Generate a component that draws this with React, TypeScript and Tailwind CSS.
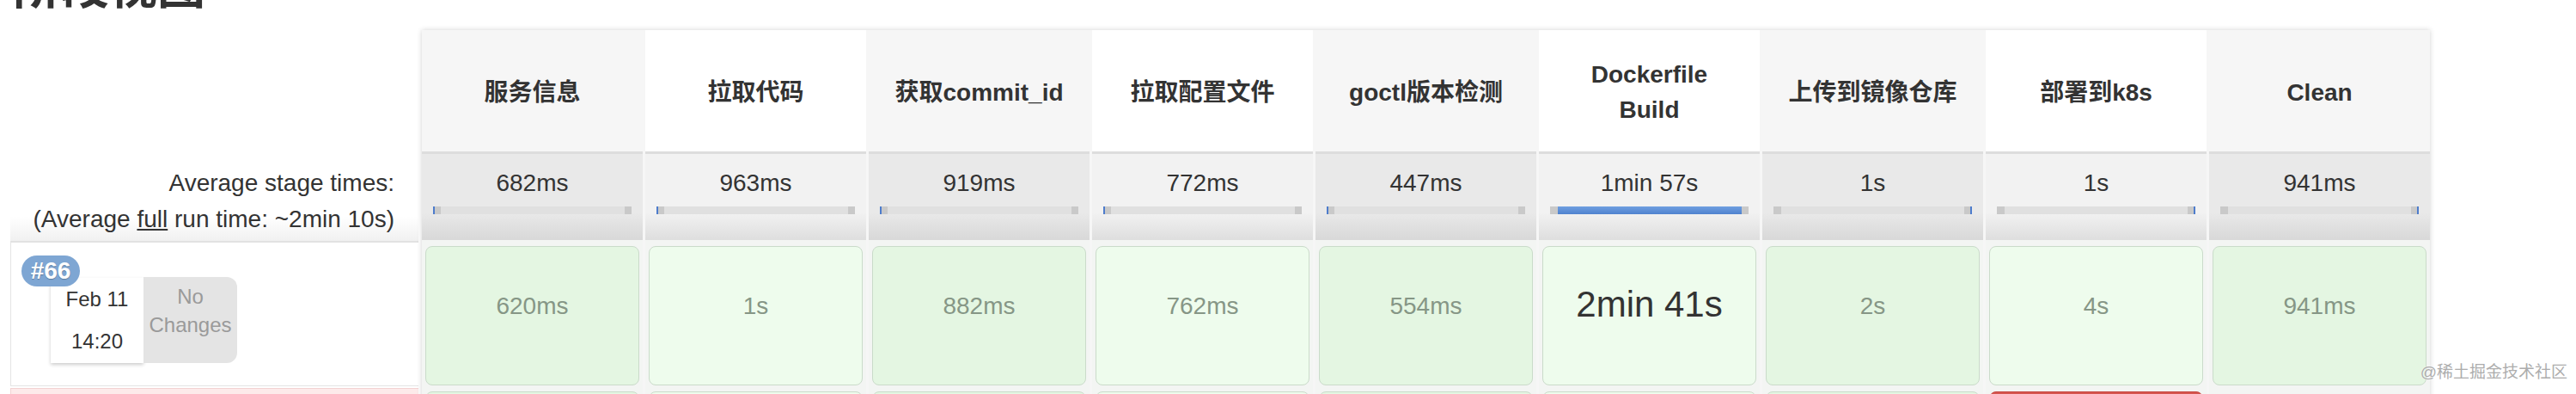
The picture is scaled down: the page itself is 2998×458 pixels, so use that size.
type Stage = {
  name: string[];
  avg: string;
  run: string;
  bar: "start" | "full" | "end";
  big?: boolean;
  next: "ok" | "failed" | "none";
};

const stages: Stage[] = [
  { name: ["服务信息"], avg: "682ms", run: "620ms", bar: "start", next: "ok" },
  { name: ["拉取代码"], avg: "963ms", run: "1s", bar: "start", next: "ok" },
  { name: ["获取commit_id"], avg: "919ms", run: "882ms", bar: "start", next: "ok" },
  { name: ["拉取配置文件"], avg: "772ms", run: "762ms", bar: "start", next: "ok" },
  { name: ["goctl版本检测"], avg: "447ms", run: "554ms", bar: "start", next: "ok" },
  { name: ["Dockerfile", "Build"], avg: "1min 57s", run: "2min 41s", bar: "full", big: true, next: "ok" },
  { name: ["上传到镜像仓库"], avg: "1s", run: "2s", bar: "end", next: "ok" },
  { name: ["部署到k8s"], avg: "1s", run: "4s", bar: "end", next: "failed" },
  { name: ["Clean"], avg: "941ms", run: "941ms", bar: "end", next: "none" },
];

function Bar({ kind }: { kind: Stage["bar"] }) {
  return (
    <div className="mx-auto mt-[12px] flex h-[9px] w-[231px] bg-[#e0e0e0]">
      {kind === "start" && <div className="w-[2px] bg-[#4d7ccc]" />}
      <div className={kind === "start" ? "w-[7px] bg-[#c9c9c9]" : "w-[9px] bg-[#c9c9c9]"} />
      {kind === "full" ? (
        <div className="flex-1 bg-[linear-gradient(to_bottom,#6f9fe0,#4f82cf)]" />
      ) : (
        <div className="flex-1" />
      )}
      <div className={kind === "end" ? "w-[7px] bg-[#c9c9c9]" : "w-[8px] bg-[#c9c9c9]"} />
      {kind === "end" && <div className="w-[2px] bg-[#4d7ccc]" />}
    </div>
  );
}

function StageColumn({ stage, odd }: { stage: Stage; odd: boolean }) {
  return (
    <div className="flex w-[257px] flex-col">
      <div
        className={`flex h-[141px] flex-col items-center justify-center pt-[3px] font-bold text-[28px] leading-[41px] text-[#333] ${
          odd ? "bg-[#f6f6f6]" : "bg-white"
        }`}
      >
        {stage.name.map((line) => (
          <span key={line}>{line}</span>
        ))}
      </div>
      <div
        className={`h-[103px] border-t-[3px] border-[#dddddd] pt-[19px] ${
          odd
            ? "bg-[linear-gradient(to_bottom,#e9e9e9_68%,#d8d8d8)]"
            : "bg-[linear-gradient(to_bottom,#f2f2f2_68%,#dedede)]"
        }`}
      >
        <div className="text-center text-[28px] leading-[30px] text-[#333]">{stage.avg}</div>
        <Bar kind={stage.bar} />
      </div>
      <div className="h-[7px] bg-[#f3f5f3]" />
      <div className="bg-[#f3f5f3] px-[4px]">
        <div
          className={`h-[162px] rounded-[8px] border border-[#cadbca] text-center leading-[40px] ${
            odd ? "bg-[#e4f6e2]" : "bg-[#eefced]"
          } ${stage.big ? "pt-[47px] text-[42px] text-[#333]" : "pt-[49px] text-[28px] text-[#869686]"}`}
        >
          {stage.run}
        </div>
      </div>
      <div className="h-[7px] bg-[#f3f5f3]" />
      <div className="h-[40px] bg-[#f3f5f3] px-[4px]">
        {stage.next === "ok" && (
          <div className={`h-full rounded-t-[8px] border border-[#cadbca] ${odd ? "bg-[#e4f6e2]" : "bg-[#eefced]"}`} />
        )}
        {stage.next === "failed" && (
          <div className="h-full rounded-t-[8px] border border-[#c4463f] bg-[#d65650]" />
        )}
      </div>
    </div>
  );
}

function RunInfo() {
  return (
    <div className="ml-[12px] w-[475px] shrink-0">
      <div className="h-[141px]" />
      <div className="h-[106px] border-b-2 border-[#e2e2e2] bg-[linear-gradient(to_bottom,#ffffff_72%,#f1f1f1)] pr-[28px] pt-[16px] text-right text-[28px] leading-[42px] text-[#333]">
        <div>Average stage times:</div>
        <div>
          (Average <span className="underline">full</span> run time: ~2min 10s)
        </div>
      </div>
      <div className="h-[167px] border-b border-l border-[#e4e4e4] bg-white pl-[12px] pt-[15px]">
        <div className="relative z-10 flex h-[36px] w-[68px] items-center justify-center rounded-full bg-[#7ea6d3] text-[28px] font-bold text-white [text-shadow:0_1px_1px_rgba(0,0,0,0.25)]">
          #66
        </div>
        <div className="-mt-[10px] ml-[34px] flex items-start">
          <div className="h-[99px] w-[108px] bg-white text-center text-[24px] leading-[49px] text-[#333] shadow-[0_2px_4px_rgba(0,0,0,0.2)]">
            <div>Feb 11</div>
            <div>14:20</div>
          </div>
          <div className="-mt-[1px] h-[100px] w-[109px] rounded-r-[12px] bg-[#e4e4e4] pt-[6px] text-center text-[24px] leading-[33px] text-[#9a9a9a]">
            <div>No</div>
            <div>Changes</div>
          </div>
        </div>
      </div>
      <div className="mt-[2px] h-[40px] border-l border-t border-[#f2d2d2] bg-[#fdeaea]" />
    </div>
  );
}

export default function App() {
  return (
    <div className="relative h-[458px] w-[2998px] overflow-hidden bg-white font-['Liberation_Sans','Noto_Sans_CJK_SC',sans-serif]">
      <h2 className="-mt-[43px] mb-[22px] pl-[15px] text-[56px] font-bold leading-[56px] text-[#333]">阶段视图</h2>
      <div className="flex items-start">
        <RunInfo />
        <div className="ml-[4px] flex gap-[3px] bg-[#f6f6f6] shadow-[0_0_6px_rgba(0,0,0,0.18)]">
          {stages.map((s, i) => (
            <StageColumn key={s.name.join("")} stage={s} odd={i % 2 === 0} />
          ))}
        </div>
      </div>
      <span className="absolute right-[10px] top-[421px] text-[19px] leading-[24px] text-[#adadad] [text-shadow:0_0_2px_#fff]">
        @稀土掘金技术社区
      </span>
    </div>
  );
}
